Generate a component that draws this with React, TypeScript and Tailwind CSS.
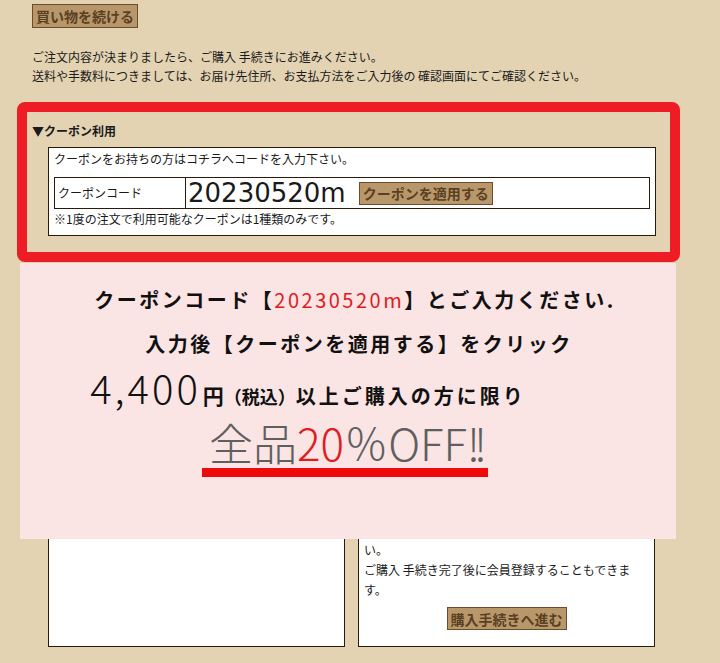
import React from 'react';

const jp = "font-['Noto_Sans_CJK_JP',sans-serif]";
const btn =
  'flex items-center justify-center whitespace-nowrap bg-[#b8986b] border border-[#6b4c2c] text-[#5b3f22] font-bold text-[14px] leading-none';

export default function App() {
  return (
    <div className={`relative w-[720px] h-[663px] overflow-hidden bg-[#e3d3b3] text-[#1a1a1a] ${jp}`}>
      {/* 通常のカート画面 */}
      <div className="pl-[32px] pt-[4px]">
        <button className={`${btn} h-[24px] w-[106px]`}>買い物を続ける</button>
        <div className="mt-[19px] text-[12px] leading-[19px]">
          <p>ご注文内容が決まりましたら、ご購入 手続きにお進みください。</p>
          <p>送料や手数料につきましては、お届け先住所、お支払方法をご入力後の 確認画面にてご確認ください。</p>
        </div>
        <h3 className="mt-[37px] text-[12px] leading-[18px] font-bold">▼クーポン利用</h3>
      </div>

      <div className="ml-[48px] mt-[7px] w-[608px] bg-white border border-[#2b1a0a] px-[5px] pt-[2px] pb-[7px] text-[12px]">
        <p className="leading-[18px]">クーポンをお持ちの方はコチラへコードを入力下さい。</p>
        <div className="mt-[9px] flex h-[32px] border border-[#2b1a0a]">
          <div className="w-[131px] border-r border-[#2b1a0a] flex items-center pl-[3px]">クーポンコード</div>
          <div className="flex items-center pl-[2px]">
            <span className="font-['DejaVu_Sans',sans-serif] text-[26px] leading-none">20230520m</span>
            <button className={`${btn} ml-[13px] h-[23px] w-[134px] text-[13px]`}>クーポンを適用する</button>
          </div>
        </div>
        <p className="mt-[1px] leading-[18px]">※1度の注文で利用可能なクーポンは1種類のみです。</p>
      </div>

      <div className="ml-[48px] mt-[238px] w-[607px] grid grid-cols-2 gap-[13px] text-[12px] leading-[20px]">
        <div className="bg-white border border-[#2b1a0a] px-[5px] pt-[5px]">
          <p className="font-bold">会員の方</p>
          <p>メールアドレスとパスワードを入力してください。</p>
        </div>
        <div className="bg-white border border-[#2b1a0a] px-[5px] pt-[5px] pb-[16px]">
          <p className="font-bold">初めての方</p>
          <p>
            会員登録をしなくてもご購入いただけます。
            <br />
            ご購入手続きへお進みくださ
            <br />
            い。
            <br />
            ご購入 手続き完了後に会員登録することもできま
            <br />
            す。
          </p>
          <div className="mt-[7px] flex justify-center">
            <button className={`${btn} h-[23px] w-[120px]`}>購入手続きへ進む</button>
          </div>
        </div>
      </div>

      {/* 告知の重ね表示 */}
      <div className="absolute left-[17px] top-[102px] w-[663px] h-[160px] border-[10px] border-[#ee1c25] rounded-[8px]" />
      <div className="absolute left-[20px] top-[263px] w-[656px] h-[276px] bg-[#fae4e4] flex flex-col items-center pt-[23px] font-bold text-[#111]">
        <p className="ml-[14px] text-[20px] leading-[28px] tracking-[2.5px]">
          クーポンコード【<span className="text-[#e01b22] font-normal">20230520m</span>】とご入力ください.
        </p>
        <p className="ml-[22px] mt-[16px] text-[20px] leading-[28px] tracking-[2.5px]">入力後【クーポンを適用する】をクリック</p>
        <div className="mr-[80px] mt-[7px] flex items-baseline h-[44px]">
          <span className="font-light text-[40px] leading-[44px] tracking-[3px]">4,400</span>
          <span className="ml-[2px] text-[21px]">円</span>
          <span className="text-[18px]">（税込）</span>
          <span className="text-[20px] tracking-[3px]">以上ご購入の方に限り</span>
        </div>
        <p className="mr-[6px] mt-[9px] text-[44px] leading-[48px] font-light text-[#5f5f5f]">
          全品<span className="text-[#e01b22]">20</span>％OFF<span className="tracking-[-6px]">!!</span>
        </p>
        <div className="mr-[6px] mt-[2px] h-[9px] w-[286px] bg-[#ee0a0a]" />
      </div>
    </div>
  );
}
